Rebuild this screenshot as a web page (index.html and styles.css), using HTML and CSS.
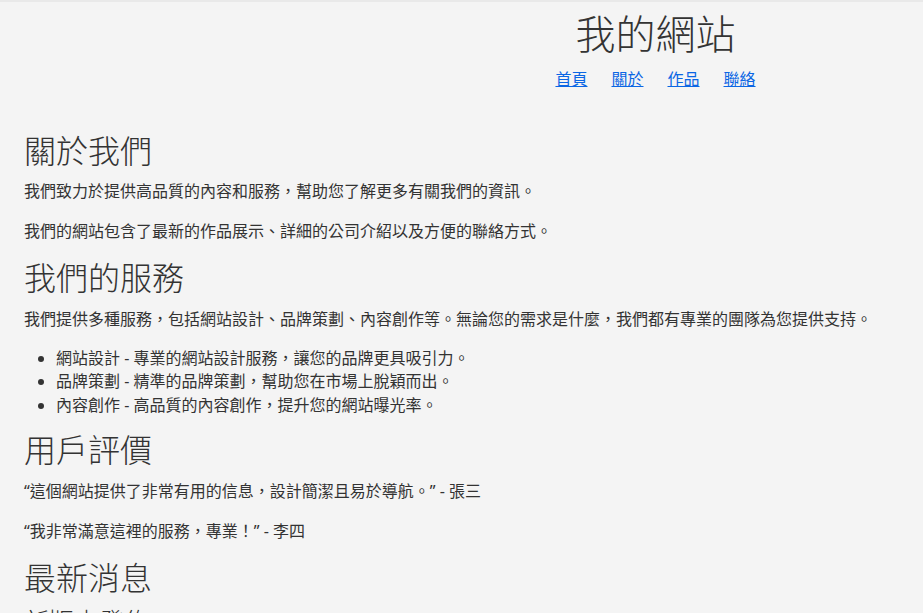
FILE: index.html
```html
<!DOCTYPE html>
<html lang="zh-Hant">
<head>
    <meta charset="UTF-8">
    <title>我的網站</title>
    <link rel="stylesheet" href="styles.css">
</head>
<body>
    <header class="site-header">
        <div class="brand"></div>
        <div class="header-main">
            <h1>我的網站</h1>
            <nav class="site-nav">
                <a href="#">首頁</a>
                <a href="#about">關於</a>
                <a href="#works">作品</a>
                <a href="#contact">聯絡</a>
            </nav>
        </div>
    </header>

    <main class="content">
        <section id="about">
            <h2>關於我們</h2>
            <p>我們致力於提供高品質的內容和服務，幫助您了解更多有關我們的資訊。</p>
            <p>我們的網站包含了最新的作品展示、詳細的公司介紹以及方便的聯絡方式。</p>
        </section>

        <section id="services">
            <h2>我們的服務</h2>
            <p>我們提供多種服務，包括網站設計、品牌策劃、內容創作等。無論您的需求是什麼，我們都有專業的團隊為您提供支持。</p>
            <ul>
                <li>網站設計 - 專業的網站設計服務，讓您的品牌更具吸引力。</li>
                <li>品牌策劃 - 精準的品牌策劃，幫助您在市場上脫穎而出。</li>
                <li>內容創作 - 高品質的內容創作，提升您的網站曝光率。</li>
            </ul>
        </section>

        <section id="reviews">
            <h2>用戶評價</h2>
            <p>“這個網站提供了非常有用的信息，設計簡潔且易於導航。” - 張三</p>
            <p>“我非常滿意這裡的服務，專業！” - 李四</p>
        </section>

        <section id="news">
            <h2>最新消息</h2>
            <h3>新版本發佈</h3>
            <p>我們的網站已更新，帶來更好的使用體驗。</p>
        </section>
    </main>
</body>
</html>
```

FILE: styles.css
```css
body {
    margin: 0;
    font-family: "Noto Sans", "Noto Sans CJK TC", sans-serif;
    font-size: 16px;
    line-height: 24px;
    color: #333;
    background-color: #f4f4f4;
    border-top: 2px solid #e9e9e9;
}

.site-header {
    display: grid;
    grid-template-columns: 388px 1fr;
}

.header-main {
    text-align: center;
}

.header-main h1 {
    margin: 2px 0 3px;
    font-size: 40px;
    font-weight: 300;
    line-height: 60px;
}

.site-nav {
    display: flex;
    justify-content: center;
    gap: 24px;
}

.site-nav a {
    color: #0b66e4;
}

.content {
    padding: 41px 24px 0;
}

h2 {
    margin: 0 0 9px;
    font-size: 32px;
    font-weight: 300;
    line-height: 1.2;
}

h3 {
    margin: 0;
    font-size: 25px;
    font-weight: 300;
    line-height: 1.2;
}

p {
    margin: 0 0 16px;
}

ul {
    margin: 0 0 14px;
    padding-left: 32px;
}

li {
    line-height: 23.5px;
}
```
